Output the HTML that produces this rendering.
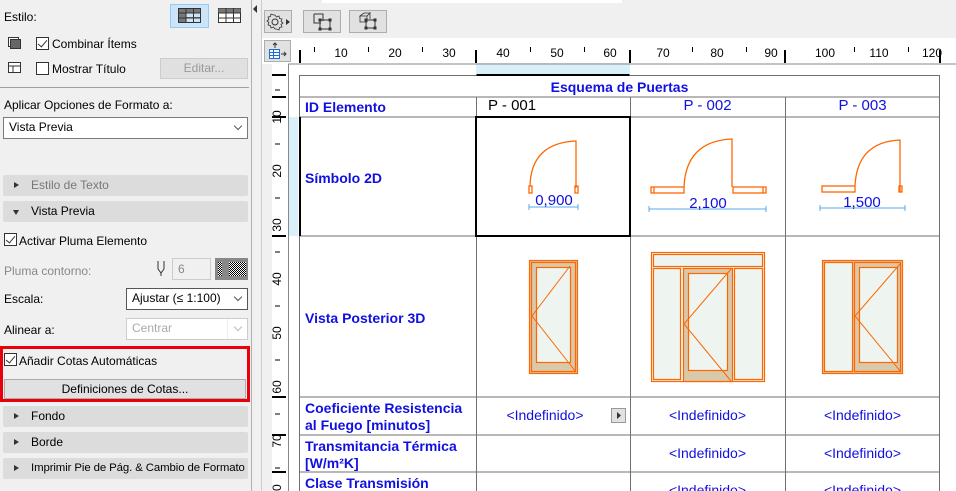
<!DOCTYPE html>
<html><head><meta charset="utf-8"><style>
*{margin:0;padding:0;box-sizing:border-box}
html,body{width:956px;height:491px;overflow:hidden}
body{background:#f0f0f0;font-family:"Liberation Sans",sans-serif;font-size:12px;color:#000;position:relative}
.a{position:absolute;white-space:nowrap}
.cb{position:absolute;width:13px;height:13px;border:1px solid #333;background:#fff}
.cb.k:after{content:"";position:absolute;left:3px;top:0px;width:4px;height:8px;border:solid #333;border-width:0 1.5px 1.5px 0;transform:rotate(40deg)}
.sec{position:absolute;left:3px;width:245px;height:21px;background:#dcdcdc;border-radius:2px;line-height:21px;padding-left:28px;font-size:12px;white-space:nowrap;overflow:hidden}
.sec:before{content:"";position:absolute;left:11px;top:7px;border-left:5px solid #333;border-top:3.5px solid transparent;border-bottom:3.5px solid transparent}
.sec.o:before{left:10px;top:9px;border-top:5px solid #333;border-left:3.5px solid transparent;border-right:3.5px solid transparent;border-bottom:0}
.sel{position:absolute;background:#fff;border:1px solid #7a7a7a;padding-left:5px;line-height:19px;white-space:nowrap}
.chev{position:absolute;right:6px;top:5px;width:6px;height:6px;border:solid #555;border-width:0 1px 1px 0;transform:rotate(45deg)}
.tb{position:absolute;background:#e1e1e1;border:1px solid #adadad}
.t{position:absolute;color:#1010e0;font-size:14px;white-space:nowrap}
.b{font-weight:bold}
</style></head><body>
<div class="a" style="left:4px;top:10px">Estilo:</div>
<div class="a" style="left:170px;top:4px;width:39px;height:24px;background:#cce4f7;border:1px solid #99c9ef"></div>
<svg class="a" style="left:178px;top:8px" width="24" height="16"><rect x="0.5" y="0.5" width="22" height="14" fill="#777" stroke="#333"/><rect x="8" y="5" width="7" height="4" fill="#cce4f7"/><rect x="16" y="5" width="6" height="4" fill="#cce4f7"/><rect x="8" y="10" width="7" height="4" fill="#cce4f7"/><rect x="16" y="10" width="6" height="4" fill="#cce4f7"/><path d="M0 5H23M0 10H23M8 0V15M15.5 0V15" stroke="#333"/></svg>
<svg class="a" style="left:218px;top:8px" width="24" height="16"><rect x="0.5" y="0.5" width="22" height="14" fill="#fff" stroke="#333"/><rect x="0.5" y="0.5" width="22" height="4" fill="#777"/><path d="M0 5H23M0 10H23M8 0V15M15.5 0V15" stroke="#333"/></svg>
<svg class="a" style="left:8px;top:37px" width="13" height="13"><rect x="0.5" y="0.5" width="10" height="9" fill="#fff" stroke="#333"/><rect x="2.5" y="2.5" width="10" height="9" fill="#666" stroke="#333"/></svg>
<div class="cb k" style="left:36px;top:37px"></div><div class="a" style="left:52px;top:37px">Combinar Ítems</div>
<svg class="a" style="left:8px;top:62px" width="13" height="12"><rect x="0.5" y="0.5" width="12" height="10" fill="#fff" stroke="#333"/><path d="M0 4H13M5 4V11" stroke="#333"/></svg>
<div class="cb" style="left:36px;top:62px"></div><div class="a" style="left:52px;top:62px">Mostrar Título</div>
<div class="a" style="left:160px;top:58px;width:88px;height:21px;background:#e0e0e0;border:1px solid #ccc;color:#999;text-align:center;line-height:19px">Editar...</div>
<div class="a" style="left:0;top:87px;width:249px;height:1px;background:#a0a0a0"></div>
<div class="a" style="left:4px;top:98px">Aplicar Opciones de Formato a:</div>
<div class="sel" style="left:3px;top:117px;width:245px;height:22px">Vista Previa<span class="chev"></span></div>
<div class="sec" style="top:175px;color:#777">Estilo de Texto</div>
<div class="sec o" style="top:201px">Vista Previa</div>
<div class="cb k" style="left:4px;top:233px"></div><div class="a" style="left:19px;top:234px">Activar Pluma Elemento</div>
<div class="a" style="left:4px;top:264px;color:#888">Pluma contorno:</div>
<svg class="a" style="left:156px;top:260px" width="10" height="16"><path d="M2 1V9L5 13L8 9V1M5 13V16" stroke="#333" fill="none"/></svg>
<div class="a" style="left:172px;top:258px;width:39px;height:22px;border:1px solid #ccc;color:#888;padding:3px 0 0 5px">6</div>
<div class="a" style="left:215px;top:258px;width:33px;height:22px;background:#888"></div>
<svg class="a" style="left:218px;top:262px" width="28" height="14"><defs><pattern id="p" width="2" height="2" patternUnits="userSpaceOnUse"><rect width="1" height="1" fill="#000"/><rect x="1" y="1" width="1" height="1" fill="#000"/><rect x="1" width="1" height="1" fill="#fff"/><rect y="1" width="1" height="1" fill="#fff"/></pattern></defs><rect width="4" height="14" fill="url(#p)"/><rect x="11" width="17" height="14" fill="url(#p)"/></svg>
<div class="a" style="left:4px;top:292px">Escala:</div>
<div class="sel" style="left:126px;top:288px;width:122px;height:22px;border-color:#555">Ajustar (≤ 1:100)<span class="chev"></span></div>
<div class="a" style="left:4px;top:323px">Alinear a:</div>
<div class="sel" style="left:126px;top:318px;width:122px;height:22px;border-color:#ccc;background:#fff;color:#aaa">Centrar<span class="a" style="right:0;top:0;width:20px;height:20px;background:#fff;border-left:1px solid #eee"></span><span class="chev" style="border-color:#bbb"></span></div>
<div class="a" style="left:0;top:346px;width:250px;height:56px;border:3px solid #e8000b"></div>
<div class="cb k" style="left:4px;top:353px"></div><div class="a" style="left:19px;top:354px">Añadir Cotas Automáticas</div>
<div class="a" style="left:4px;top:379px;width:242px;height:20px;background:#e1e1e1;border:1px solid #adadad;text-align:center;line-height:18px">Definiciones de Cotas...</div>
<div class="sec" style="top:406px">Fondo</div>
<div class="sec" style="top:432px">Borde</div>
<div class="sec" style="top:458px;font-size:11.4px;letter-spacing:-0.1px">Imprimir Pie de Pág. &amp; Cambio de Formato</div>
<div class="a" style="left:251px;top:0;width:1px;height:491px;background:#b0b0b0"></div>
<div class="a" style="left:253px;top:5px;border-right:4px solid #333;border-top:4px solid transparent;border-bottom:4px solid transparent"></div>
<div class="a" style="left:322px;top:0;width:300px;height:3px;background:#fff"></div>
<div class="a" style="left:261px;top:0;width:1px;height:491px;background:#ccc"></div>
<div class="tb" style="left:264px;top:10px;width:28px;height:23px"></div>
<svg class="a" style="left:266px;top:12px" width="26" height="20"><circle cx="9" cy="10" r="3" fill="none" stroke="#333"/><path d="M9 3l1.5 2 2.5-1 .5 2.5 2.5.5-1 2.5 2 1.5-2 1.5 1 2.5-2.5.5-.5 2.5-2.5-1L9 17l-1.5-2-2.5 1-.5-2.5L2 13l1-2.5L1 9l2-1.5L2 5l2.5-.5L5 2l2.5 1z" fill="none" stroke="#333" stroke-width=".8"/><path d="M20 7l4 3-4 3z" fill="#333"/></svg>
<div class="tb" style="left:303px;top:10px;width:38px;height:23px"></div>
<svg class="a" style="left:313px;top:13px" width="20" height="18"><path d="M1 1h9v7M1 1v9h7" stroke="#333" fill="none"/><rect x="7" y="7" width="10" height="9" fill="none" stroke="#333"/><g fill="#333"><rect x="5.5" y="5.5" width="3" height="3"/><rect x="15.5" y="5.5" width="3" height="3"/><rect x="5.5" y="14.5" width="3" height="3"/><rect x="15.5" y="14.5" width="3" height="3"/></g></svg>
<div class="tb" style="left:349px;top:10px;width:38px;height:23px"></div>
<svg class="a" style="left:358px;top:12px" width="22" height="20"><path d="M2 4l4-3h6l-3 3zM2 4v6h7V4M9 4l3-3v6" stroke="#333" fill="#ddd" stroke-width=".8"/><rect x="8" y="8" width="9" height="8" fill="none" stroke="#333"/><g fill="#333"><rect x="6.5" y="6.5" width="3" height="3"/><rect x="15.5" y="6.5" width="3" height="3"/><rect x="6.5" y="14.5" width="3" height="3"/><rect x="15.5" y="14.5" width="3" height="3"/></g></svg>
<div class="a" style="left:262px;top:38px;width:694px;height:453px;background:#fff"></div>
<div class="tb" style="left:264px;top:40px;width:27px;height:22px"></div>
<svg class="a" style="left:267px;top:42px" width="22" height="18"><path d="M8 1v5M6 3l2-2 2 2" stroke="#333" fill="none"/><rect x="2.5" y="7.5" width="10" height="9" fill="#fff" stroke="#1a6fd6"/><path d="M2 10.5h11M2 13.5h11M6.5 7v10" stroke="#1a6fd6"/><path d="M14 12h5M17 10l2 2-2 2" stroke="#333" fill="none"/></svg>
<div class="a" style="left:262px;top:64px;width:10px;height:427px;background:#f0f0f0"></div>
<svg class="a" style="left:262px;top:38px" width="694" height="453">
<g transform="translate(-262,-38)">
<rect x="476" y="63" width="154" height="11" fill="#d9f0fb"/>
<rect x="289" y="117" width="9" height="119" fill="#d9f0fb"/>
<path d="M288 64H956M288.5 64V491" stroke="#888"/>
<g stroke="#000">
<path d="M300 50v13M476 50v13M630 50v13M785 50v13M940 50v13" stroke-width="2"/>
<path d="M314.5 47v5M368.5 47v5M422.5 47v5M530.5 47v5M584.5 47v5M692.5 47v5M746.5 47v5M854.5 47v5M908.5 47v5"/>
<path d="M272 75h14M272 97h14M272 117h14M272 236h14M272 397h14M272 435h14M272 472h14" stroke-width="2"/>
<path d="M275 90h5M275 144h5M275 198h5M275 252h5M275 306h5M275 360h5M275 414h5M275 468h5"/>
</g>
<g font-family="Liberation Sans" font-size="12" fill="#000" text-anchor="middle">
<text x="341" y="57">10</text><text x="395" y="57">20</text><text x="449" y="57">30</text><text x="503" y="57">40</text><text x="557" y="57">50</text><text x="610" y="57">60</text><text x="663" y="57">70</text><text x="717" y="57">80</text><text x="771" y="57">90</text><text x="825" y="57">100</text><text x="879" y="57">110</text><text x="932" y="57">120</text>
<text transform="translate(281,117) rotate(-90)">10</text><text transform="translate(281,171) rotate(-90)">20</text><text transform="translate(281,225) rotate(-90)">30</text><text transform="translate(281,279) rotate(-90)">40</text><text transform="translate(281,333) rotate(-90)">50</text><text transform="translate(281,387) rotate(-90)">60</text><text transform="translate(281,441) rotate(-90)">70</text><text transform="translate(281,491) rotate(-90)">80</text>
</g>
<g stroke="#707070" fill="none">
<rect x="299.5" y="75.5" width="640" height="420"/>
<path d="M299 97h641M299 117h641M299 236h641M299 397h641M299 435h641M299 472h641M476.5 97V491M630.5 97V491M785.5 97V491"/>
</g>
<rect x="476.5" y="74" width="153" height="2" fill="#000"/>
<rect x="476" y="117" width="154" height="119" fill="none" stroke="#000" stroke-width="2"/>
<rect x="299" y="117" width="2" height="119" fill="#000"/>
<g stroke="#ff6600" fill="none" stroke-width="1.3">
<path d="M530 186Q531 143 576 141V188"/><rect x="529" y="186" width="3" height="7"/><rect x="575" y="186" width="3" height="7"/>
<path d="M684 187Q686 141 732 139V187"/><rect x="651" y="187" width="33" height="6"/><rect x="733" y="187" width="33" height="6"/><path d="M654 187v6M763 187v6"/>
<path d="M855 186Q857 142 900 140V192"/><rect x="822" y="186" width="33" height="6"/><rect x="899" y="186" width="3" height="6"/>
</g>
<g stroke="#5aa8e8" fill="none">
<path d="M529 207h49M529 204v6M578 204v6M649 209h117M649 206v6M766 206v6M820 208h85M820 205v6M905 205v6"/>
</g>
<g font-family="Liberation Sans" font-size="15" fill="#1010e0" text-anchor="middle">
<text x="554" y="205">0,900</text><text x="708" y="208">2,100</text><text x="862" y="207">1,500</text>
</g>
<g stroke="#ff6600" stroke-width="1.2">
<rect x="529.5" y="260.5" width="48" height="113" fill="#d9c9ab"/><rect x="531.5" y="262.5" width="44" height="109" fill="none"/>
<rect x="536.5" y="267.5" width="34" height="95" fill="#eef5f0"/>
<path d="M570 266L532 316L576 372" fill="none" stroke-width="1"/>
<rect x="651.5" y="252.5" width="113" height="129" fill="#eef5f0"/>
<rect x="653.5" y="254.5" width="109" height="12" fill="#eef5f0"/>
<rect x="653.5" y="268.5" width="27" height="111" fill="#eef5f0"/>
<rect x="683.5" y="268.5" width="49" height="113" fill="#d9c9ab"/>
<rect x="688.5" y="273.5" width="39" height="97" fill="#eef5f0"/>
<rect x="734.5" y="268.5" width="28" height="111" fill="#eef5f0"/>
<path d="M731 269L684 324L731 381" fill="none" stroke-width="1"/>
<rect x="822.5" y="260.5" width="80" height="113" fill="#d9c9ab"/>
<rect x="824.5" y="262.5" width="28" height="109" fill="#eef5f0"/>
<rect x="854.5" y="262.5" width="46" height="109" fill="none"/>
<rect x="859.5" y="267.5" width="38" height="95" fill="#eef5f0"/>
<path d="M900 264L855 316L901 372" fill="none" stroke-width="1"/>
</g>
<rect x="611.5" y="408.5" width="14" height="14" fill="#e1e1e1" stroke="#999"/><path d="M617 412l4 3.5-4 3.5z" fill="#333"/>
</g></svg>
<div class="t b" style="left:299px;top:79px;width:641px;text-align:center">Esquema de Puertas</div>
<div class="t b" style="left:305px;top:99px">ID Elemento</div>
<div class="t" style="left:488px;top:97px;color:#000;font-size:15px">P - 001</div>
<div class="t" style="left:630px;top:97px;width:155px;text-align:center;font-size:15px">P - 002</div>
<div class="t" style="left:785px;top:97px;width:155px;text-align:center;font-size:15px">P - 003</div>
<div class="t b" style="left:305px;top:170px">Símbolo 2D</div>
<div class="t b" style="left:305px;top:310px">Vista Posterior 3D</div>
<div class="t b" style="left:305px;top:400px;line-height:17px">Coeficiente Resistencia<br>al Fuego [minutos]</div>
<div class="t b" style="left:305px;top:438px;line-height:17px">Transmitancia Térmica<br>[W/m²K]</div>
<div class="t b" style="left:305px;top:475px">Clase Transmisión</div>
<div class="t" style="left:476px;top:407px;width:138px;text-align:center">&lt;Indefinido&gt;</div>
<div class="t" style="left:630px;top:407px;width:155px;text-align:center">&lt;Indefinido&gt;</div>
<div class="t" style="left:785px;top:407px;width:155px;text-align:center">&lt;Indefinido&gt;</div>
<div class="t" style="left:630px;top:445px;width:155px;text-align:center">&lt;Indefinido&gt;</div>
<div class="t" style="left:785px;top:445px;width:155px;text-align:center">&lt;Indefinido&gt;</div>
<div class="t" style="left:630px;top:482px;width:155px;text-align:center">&lt;Indefinido&gt;</div>
<div class="t" style="left:785px;top:482px;width:155px;text-align:center">&lt;Indefinido&gt;</div>
</body></html>
